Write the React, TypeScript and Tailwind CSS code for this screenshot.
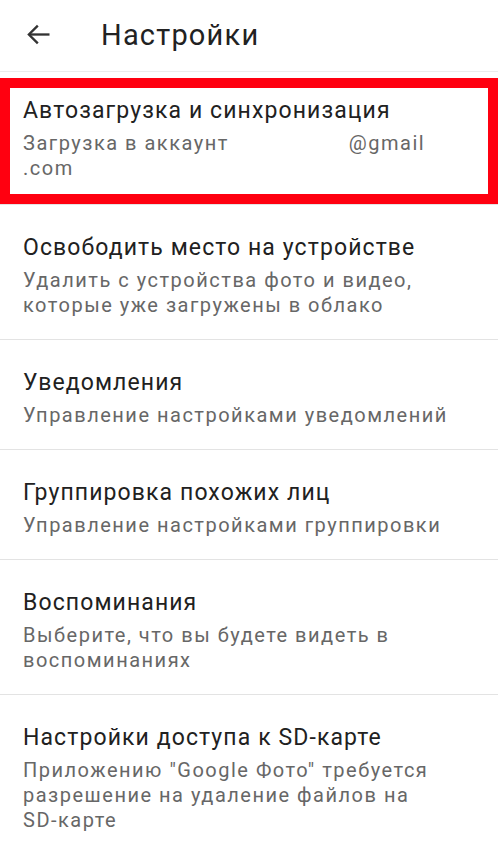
import React from "react";

interface Item {
  title: string;
  lines: React.ReactNode[];
}

const items: Item[] = [
  {
    title: "Освободить место на устройстве",
    lines: ["Удалить с устройства фото и видео,", "которые уже загружены в облако"],
  },
  {
    title: "Уведомления",
    lines: ["Управление настройками уведомлений"],
  },
  {
    title: "Группировка похожих лиц",
    lines: ["Управление настройками группировки"],
  },
  {
    title: "Воспоминания",
    lines: ["Выберите, что вы будете видеть в", "воспоминаниях"],
  },
  {
    title: "Настройки доступа к SD-карте",
    lines: [
      "Приложению \"Google Фото\" требуется",
      "разрешение на удаление файлов на",
      "SD-карте",
    ],
  },
];

const SettingRow: React.FC<{
  item: Item;
  last?: boolean;
  pad?: string;
  children?: React.ReactNode;
}> = ({ item, last, pad = "pt-[28px] pb-[21px]", children }) => (
  <div
    className={
      "relative px-[23px] " + pad + " " + (last ? "" : "border-b border-[#e3e3e3]")
    }
  >
    <div className="whitespace-nowrap text-[23px] leading-[30px] tracking-[1.1px] text-[#212121]">
      {item.title}
    </div>
    <div className="mt-[5px] whitespace-nowrap text-[20px] leading-[25px] tracking-[1.5px] text-[#676767]">
      {item.lines.map((l, i) => (
        <div key={i}>{l}</div>
      ))}
    </div>
    {children}
  </div>
);

export default function App() {
  const first: Item = {
    title: "Автозагрузка и синхронизация",
    lines: [
      <span key="a">
        Загрузка в аккаунт<span className="inline-block w-[120px]" />@gmail
      </span>,
      ".com",
    ],
  };

  return (
    <div
      className="min-h-[852px] w-full bg-white"
      style={{ fontFamily: "Roboto, 'Noto Sans', sans-serif" }}
    >
      <div className="flex h-[72px] items-center border-b border-[#ececec]">
        <div className="-mt-[3px] flex w-[101px] items-center pl-[22px]">
          <svg
            width="33"
            height="33"
            viewBox="0 0 24 24"
            fill="none"
            stroke="#333"
            strokeWidth="1.7"
          >
            <path d="M20 12H5.2" />
            <path d="M11.5 5.5L5 12l6.5 6.5" />
          </svg>
        </div>
        <div className="text-[29px] leading-none tracking-[1.2px] text-[#222]">Настройки</div>
      </div>

      {/* red highlight frame drawn over the first row */}
      <SettingRow item={first} pad="pt-[24px] pb-[23px]">
        <div className="pointer-events-none absolute left-0 right-0 top-[6px] bottom-0 border-[10px] border-[#ff0010]" />
      </SettingRow>

      {items.map((it, i) => (
        <SettingRow key={i} item={it} last={i === items.length - 1} />
      ))}
    </div>
  );
}
